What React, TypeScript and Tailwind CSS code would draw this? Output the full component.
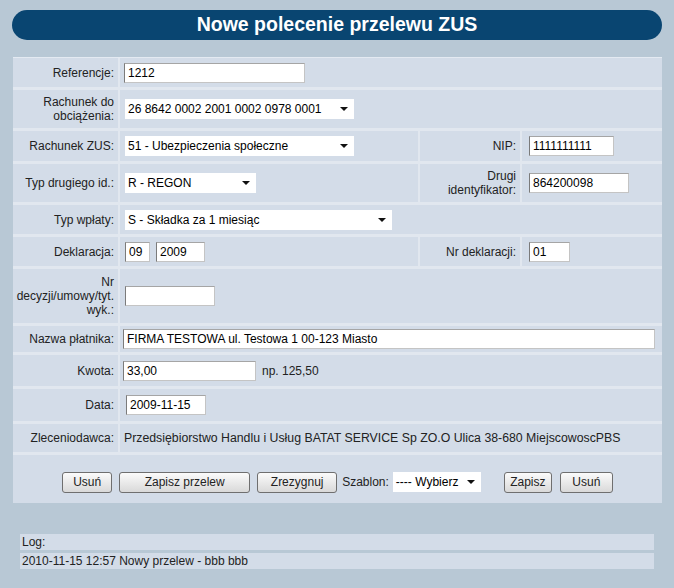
import type { ReactNode } from 'react'

function Label({ children, className = '' }: { children: ReactNode; className?: string }) {
  return (
    <div
      className={`flex items-center justify-end bg-[#d3dce8] pr-1 text-right leading-[14px] ${className}`}
    >
      <span>{children}</span>
    </div>
  )
}

function Cell({ children, className = '' }: { children?: ReactNode; className?: string }) {
  return <div className={`flex items-center bg-[#d3dce8] pl-1 ${className}`}>{children}</div>
}

function TextInput({ value, className = '' }: { value: string; className?: string }) {
  return (
    <div
      className={`flex h-[20px] items-center border border-[#c4c4c4] border-l-[#7b7b7b] border-t-[#a5a5a5] bg-white pl-[3px] text-black ${className}`}
    >
      {value}
    </div>
  )
}

function Select({ value, className = '' }: { value: string; className?: string }) {
  return (
    <div className={`flex h-[20px] items-center justify-between bg-white pl-[3px] pr-[6px] text-black ${className}`}>
      <span className="whitespace-nowrap">{value}</span>
      <svg width="8" height="4" viewBox="0 0 8 4" className="ml-1 shrink-0">
        <polygon points="0,0 8,0 4,4" fill="#111" />
      </svg>
    </div>
  )
}

function Button({ children, className = '' }: { children: ReactNode; className?: string }) {
  return (
    <div
      className={`flex h-[21px] items-center justify-center rounded-[3px] border border-[#6f6f6f] bg-gradient-to-b from-[#fbfbfb] to-[#d9d9d9] text-[#222] ${className}`}
    >
      {children}
    </div>
  )
}

export default function App() {
  return (
    <div
      className="h-[588px] w-[674px] overflow-hidden bg-[#b8c8d5] text-[12px] text-[#222]"
      style={{ fontFamily: '"Liberation Sans", Arial, sans-serif' }}
    >
      <div className="pt-[10px] pl-[12px] pr-[12px]">
        <div className="flex h-[30px] items-center justify-center rounded-full bg-[#094571] text-[19.5px] font-bold text-white">
          Nowe polecenie przelewu ZUS
        </div>
      </div>

      <div className="ml-[13px] mr-[12px] mt-[17px] flex flex-col gap-[3px] border-t border-[#e4eaf2] bg-[#e1e7ef]">
        {/* Referencje */}
        <div className="flex h-[29px] gap-[2px]">
          <Label className="w-[105px]">Referencje:</Label>
          <Cell className="flex-1">
            <TextInput value="1212" className="w-[181px]" />
          </Cell>
        </div>

        {/* Rachunek do obciazenia */}
        <div className="flex h-[38px] gap-[2px]">
          <Label className="w-[105px]">
            Rachunek do
            <br />
            obciążenia:
          </Label>
          <Cell className="flex-1">
            <Select value="26 8642 0002 2001 0002 0978 0001" className="ml-[1px] w-[229px]" />
          </Cell>
        </div>

        {/* Rachunek ZUS / NIP */}
        <div className="flex h-[30px] gap-[2px]">
          <Label className="w-[105px]">Rachunek ZUS:</Label>
          <Cell className="w-[298px]">
            <Select value="51 - Ubezpieczenia społeczne" className="ml-[1px] w-[229px]" />
          </Cell>
          <Label className="w-[100px]">NIP:</Label>
          <Cell className="flex-1">
            <TextInput value="1111111111" className="ml-[3px] w-[85px]" />
          </Cell>
        </div>

        {/* Typ drugiego id */}
        <div className="flex h-[38px] gap-[2px]">
          <Label className="w-[105px]">Typ drugiego id.:</Label>
          <Cell className="w-[298px]">
            <Select value="R - REGON" className="ml-[1px] w-[131px]" />
          </Cell>
          <Label className="w-[100px]">
            Drugi
            <br />
            identyfikator:
          </Label>
          <Cell className="flex-1">
            <TextInput value="864200098" className="ml-[3px] w-[100px]" />
          </Cell>
        </div>

        {/* Typ wplaty */}
        <div className="flex h-[29px] gap-[2px]">
          <Label className="w-[105px]">Typ wpłaty:</Label>
          <Cell className="flex-1">
            <Select value="S - Składka za 1 miesiąc" className="ml-[1px] w-[267px]" />
          </Cell>
        </div>

        {/* Deklaracja */}
        <div className="flex h-[29px] gap-[2px]">
          <Label className="w-[105px]">Deklaracja:</Label>
          <Cell className="w-[298px] gap-[6px]">
            <TextInput value="09" className="ml-[1px] w-[25px]" />
            <TextInput value="2009" className="w-[49px]" />
          </Cell>
          <Label className="w-[100px]">Nr deklaracji:</Label>
          <Cell className="flex-1">
            <TextInput value="01" className="ml-[3px] w-[41px]" />
          </Cell>
        </div>

        {/* Nr decyzji */}
        <div className="flex h-[54px] gap-[2px]">
          <Label className="w-[105px]">
            Nr
            <br />
            decyzji/umowy/tyt.
            <br />
            wyk.:
          </Label>
          <Cell className="flex-1">
            <TextInput value="" className="ml-[1px] h-[18px] w-[90px]" />
          </Cell>
        </div>

        {/* Nazwa platnika */}
        <div className="flex h-[26px] gap-[2px]">
          <Label className="w-[105px]">Nazwa płatnika:</Label>
          <Cell className="flex-1 pl-[3px]">
            <TextInput value="FIRMA TESTOWA ul. Testowa 1 00-123 Miasto" className="w-[532px]" />
          </Cell>
        </div>

        {/* Kwota */}
        <div className="flex h-[31px] gap-[2px]">
          <Label className="w-[105px]">Kwota:</Label>
          <Cell className="flex-1 pl-[3px]">
            <TextInput value="33,00" className="w-[133px]" />
            <span className="ml-[6px]">np. 125,50</span>
          </Cell>
        </div>

        {/* Data */}
        <div className="flex h-[32px] gap-[2px]">
          <Label className="w-[105px]">Data:</Label>
          <Cell className="flex-1 pl-[6px]">
            <TextInput value="2009-11-15" className="h-[19px] w-[80px]" />
          </Cell>
        </div>

        {/* Zleceniodawca */}
        <div className="flex h-[28px] gap-[2px]">
          <Label className="w-[105px]">Zleceniodawca:</Label>
          <Cell className="flex-1 text-[12.3px]">
            Przedsiębiorstwo Handlu i Usług BATAT SERVICE Sp ZO.O Ulica 38-680 MiejscowoscPBS
          </Cell>
        </div>

        {/* Buttons */}
        <div className="flex h-[48px] items-center justify-center bg-[#d3dce8] pt-[6px]">
          <Button className="w-[50px]">Usuń</Button>
          <Button className="ml-[7px] w-[131px]">Zapisz przelew</Button>
          <Button className="ml-[7px] w-[80px]">Zrezygnuj</Button>
          <span className="ml-[5px]">Szablon:</span>
          <Select value="---- Wybierz" className="ml-[4px] w-[88px]" />
          <Button className="ml-[23px] w-[48px]">Zapisz</Button>
          <Button className="ml-[8px] w-[53px]">Usuń</Button>
        </div>
      </div>

      {/* Log */}
      <div className="ml-[20px] mr-[20px] mt-[31px] flex flex-col gap-[3px]">
        <div className="flex h-[16px] items-center bg-[#d3dce8] pl-[2px]">Log:</div>
        <div className="flex h-[16px] items-center bg-[#d3dce8] pl-[2px]">
          2010-11-15 12:57 Nowy przelew - bbb bbb
        </div>
      </div>
    </div>
  )
}
